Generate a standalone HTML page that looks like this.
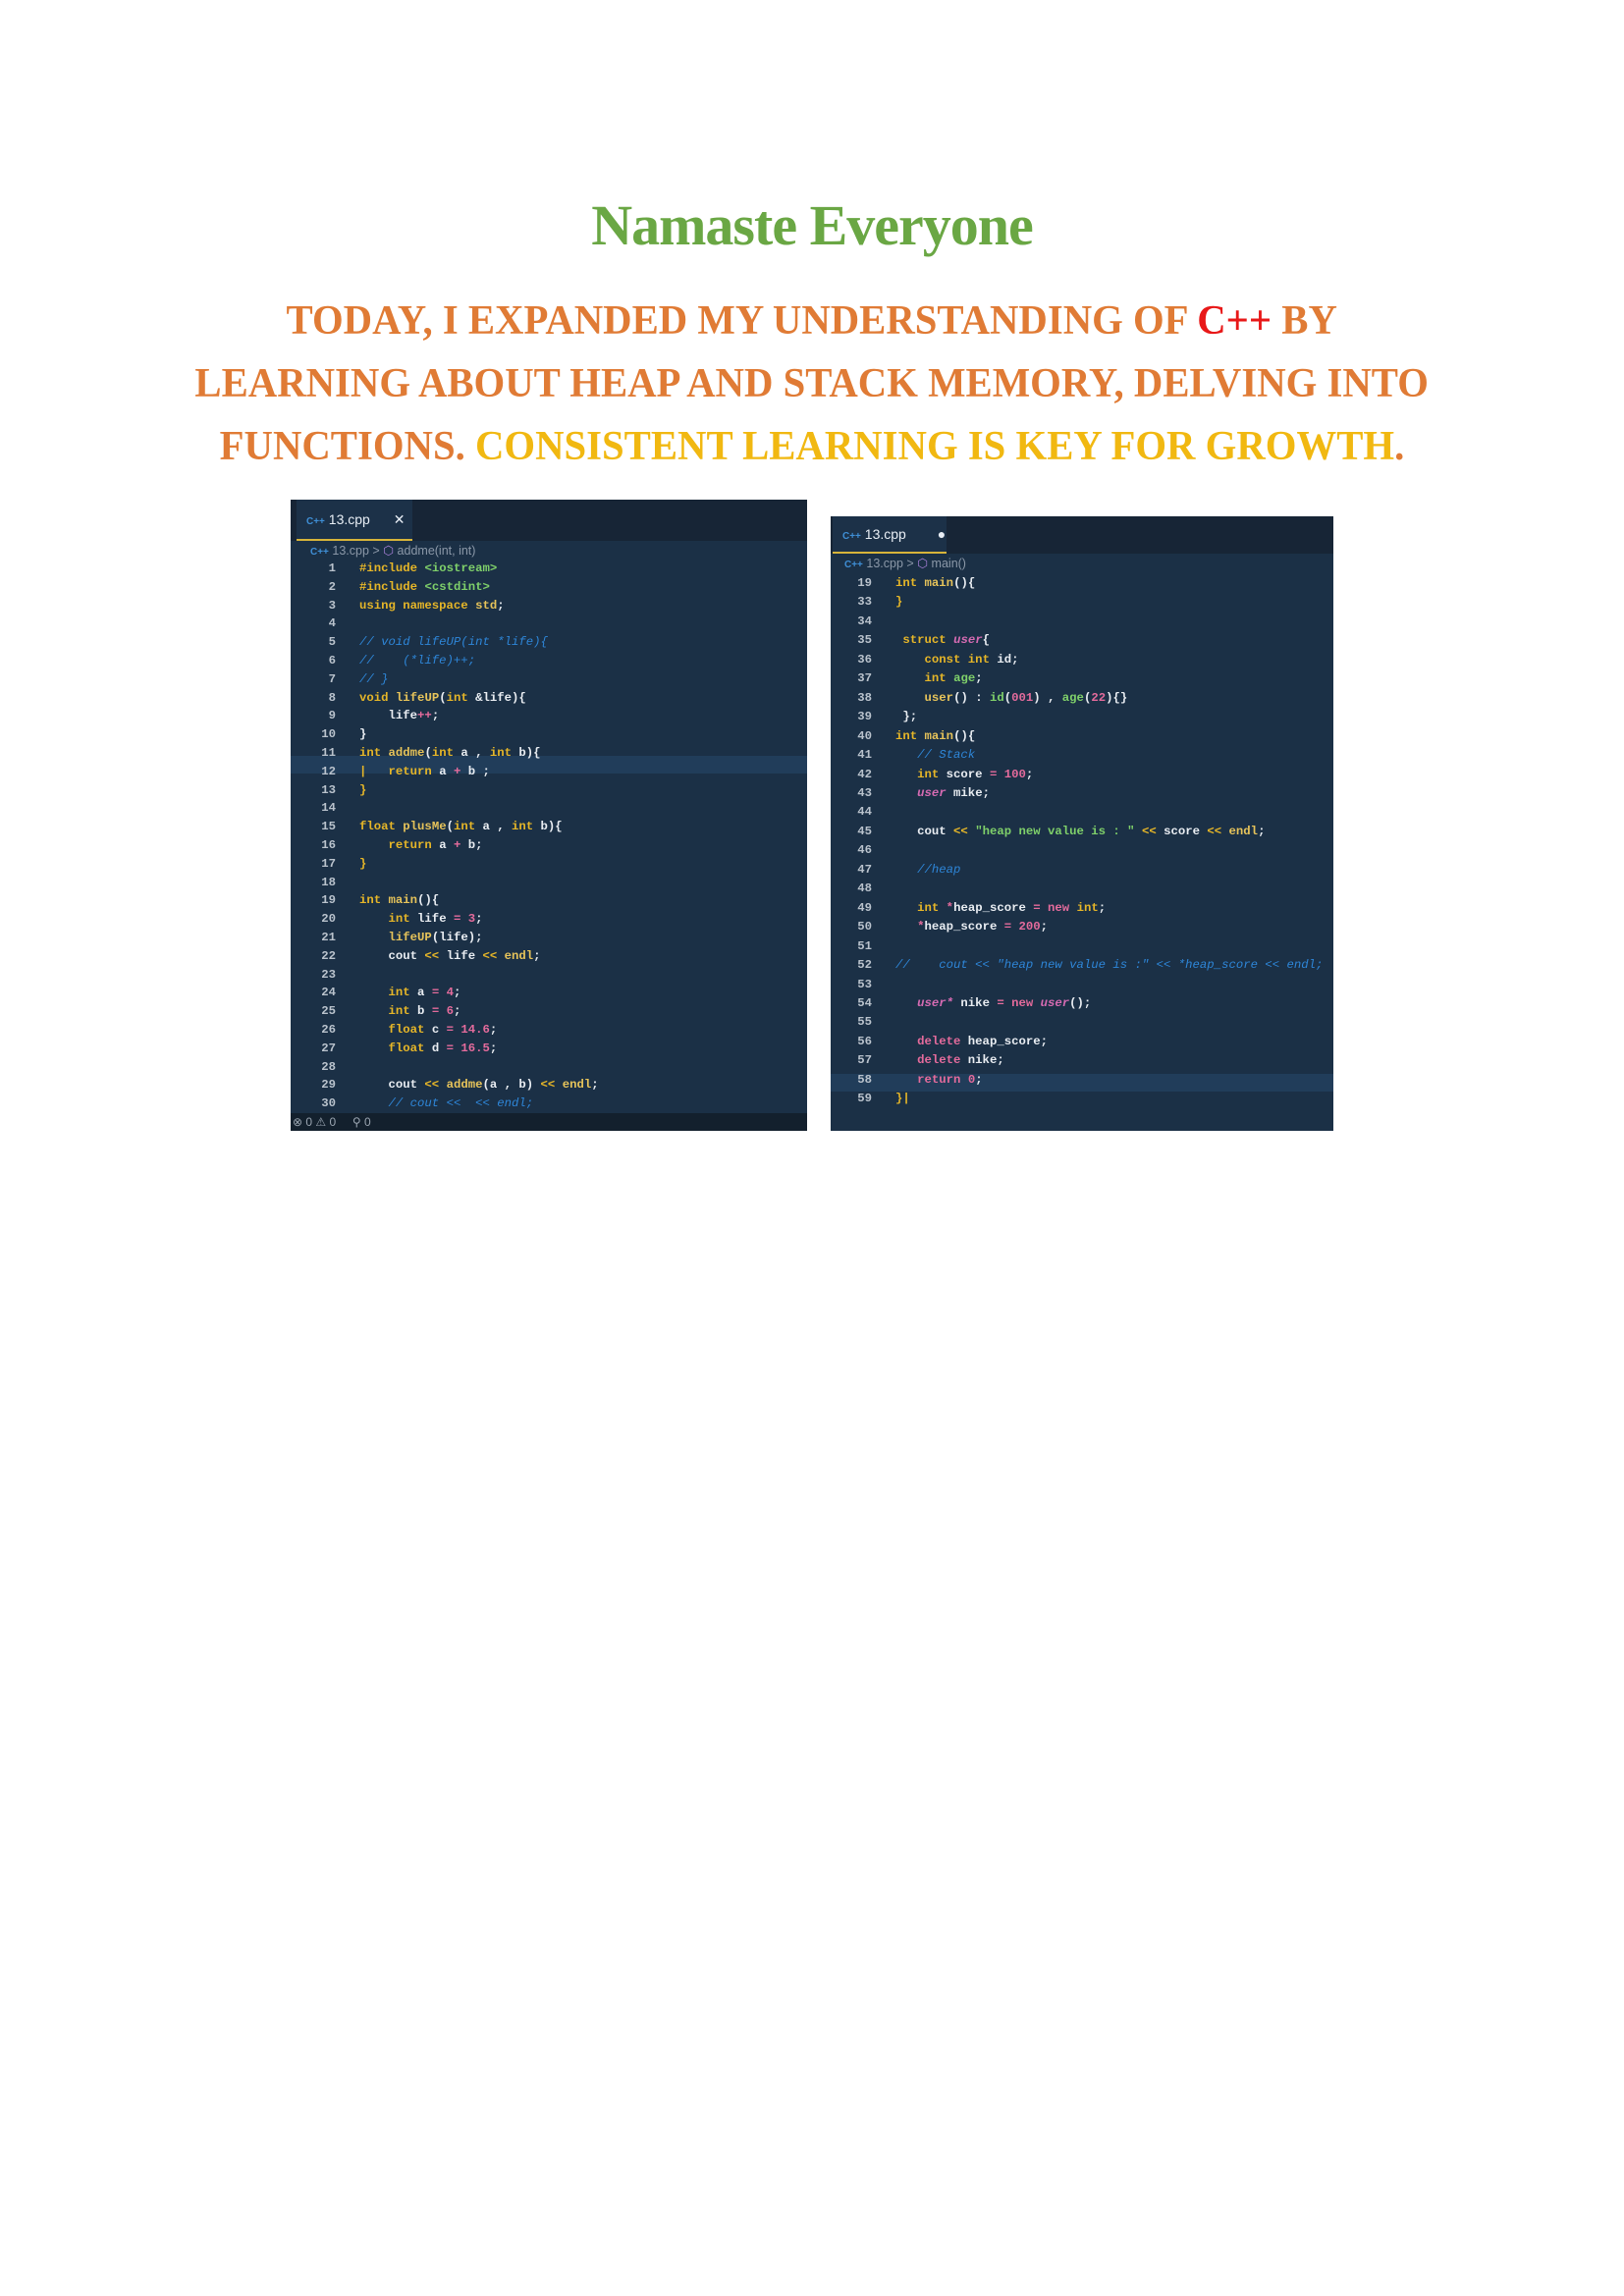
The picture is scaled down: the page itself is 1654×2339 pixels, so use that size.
<!DOCTYPE html>
<html><head><meta charset="utf-8"><style>
*{margin:0;padding:0;box-sizing:border-box}
body{width:1654px;height:2339px;background:#fff;position:relative;overflow:hidden}
h1{position:absolute;left:0;width:1654px;text-align:center;top:196px;font:700 58px "Liberation Serif",serif;color:#6aa744;letter-spacing:-1px}
.l{position:absolute;left:0;width:1654px;text-align:center;font:700 42px "Liberation Serif",serif;color:#e07b35;text-transform:uppercase;white-space:nowrap}
.l span.in{display:inline-block;transform-origin:center}
.y{color:#f1b811}.r{color:#e81818}
.p{position:absolute;background:#1b3046;overflow:hidden;font-family:"Liberation Mono",monospace}
.tb{position:absolute;left:0;top:0;right:0;background:#172536}
.tab{position:absolute;left:6px;top:0;background:#1c3148;border-bottom:2px solid #d7b43a;color:#e8eef5;font:14px "Liberation Sans",sans-serif;padding:0 10px;white-space:nowrap}
.bc{position:absolute;color:#8b98a8;font:12.5px "Liberation Sans",sans-serif;white-space:nowrap}
.cpp{color:#3f8fd6;font-size:10px;font-weight:700}
.code{position:absolute;font-size:12.3px;font-weight:700;white-space:pre;color:#e9edf2}
.n{position:absolute;text-align:right;color:#b9c2cc;font-size:12.3px;font-weight:700;white-space:pre}
.k{color:#e6b628}.g{color:#7fd06a}.c{color:#2e86d8;font-style:italic;font-weight:400}.m{color:#e46b9c}.u{color:#d66bb3;font-style:italic}.f{color:#e6c35a}
.hl{position:absolute;left:0;right:0;background:#213d5a}
</style></head><body>
<h1>Namaste Everyone</h1>
<div class="l" style="top:303px"><span class="in" style="transform:scaleX(.97)">Today, I expanded my understanding of <span class="r">C++</span> by</span></div>
<div class="l" style="top:367px"><span class="in" style="transform:scaleX(.97)">learning about heap and stack memory, delving into</span></div>
<div class="l" style="top:431px"><span class="in" style="transform:scaleX(.97)">functions. <span class="y">Consistent learning is key for growth</span>.</span></div>

<div class="p" style="left:296px;top:509px;width:526px;height:643px">
<div class="tb" style="height:42px"></div>
<div class="tab" style="height:42px;line-height:40px;width:118px"><span class="cpp">C++</span> 13.cpp <span style="margin-left:20px">✕</span></div>
<div class="bc" style="left:20px;top:44px"><span class="cpp">C++</span> 13.cpp &gt; <span style="color:#a780d8">⬡</span> addme(int, int)</div>
<div class="hl" style="top:261px;height:18px"></div>
<div class="n" style="left:0;width:46px;top:61px;line-height:18.8px">1
2
3
4
5
6
7
8
9
10
11
12
13
14
15
16
17
18
19
20
21
22
23
24
25
26
27
28
29
30</div>
<div class="code" style="left:70px;top:61px;line-height:18.8px"><span class="k">#include</span> <span class="g">&lt;iostream&gt;</span>
<span class="k">#include</span> <span class="g">&lt;cstdint&gt;</span>
<span class="k">using namespace</span> <span class="f">std</span>;

<span class="c">// void lifeUP(int *life){</span>
<span class="c">//    (*life)++;</span>
<span class="c">// }</span>
<span class="k">void</span> <span class="f">lifeUP</span>(<span class="k">int</span> &amp;life){
    life<span class="m">++</span>;
}
<span class="k">int</span> <span class="f">addme</span>(<span class="k">int</span> a , <span class="k">int</span> b){
<span class="k">|</span>   <span class="k">return</span> a <span class="m">+</span> b ;
<span class="k">}</span>

<span class="k">float</span> <span class="f">plusMe</span>(<span class="k">int</span> a , <span class="k">int</span> b){
    <span class="k">return</span> a <span class="m">+</span> b;
<span class="k">}</span>

<span class="k">int</span> <span class="f">main</span>(){
    <span class="k">int</span> life <span class="m">=</span> <span class="m">3</span>;
    <span class="f">lifeUP</span>(life);
    cout <span class="k">&lt;&lt;</span> life <span class="k">&lt;&lt;</span> <span class="f">endl</span>;

    <span class="k">int</span> a <span class="m">=</span> <span class="m">4</span>;
    <span class="k">int</span> b <span class="m">=</span> <span class="m">6</span>;
    <span class="k">float</span> c <span class="m">=</span> <span class="m">14.6</span>;
    <span class="k">float</span> d <span class="m">=</span> <span class="m">16.5</span>;

    cout <span class="k">&lt;&lt;</span> <span class="f">addme</span>(a , b) <span class="k">&lt;&lt;</span> <span class="f">endl</span>;
    <span class="c">// cout &lt;&lt;  &lt;&lt; endl;</span></div>
<div style="position:absolute;left:0;right:0;bottom:0;height:18px;background:#13202d;color:#9aa5b1;font:12px 'Liberation Sans',sans-serif;line-height:18px;padding-left:2px;white-space:nowrap">⊗ 0 ⚠ 0 &nbsp;&nbsp;&nbsp; ⚲ 0</div>
</div>

<div class="p" style="left:846px;top:526px;width:512px;height:626px">
<div class="tb" style="height:38px"></div>
<div class="tab" style="height:38px;line-height:36px;width:116px;left:2px"><span class="cpp">C++</span> 13.cpp <span style="margin-left:28px">●</span></div>
<div class="bc" style="left:14px;top:40px"><span class="cpp">C++</span> 13.cpp &gt; <span style="color:#a780d8">⬡</span> main()</div>
<div class="hl" style="top:568px;height:18px"></div>
<div class="n" style="left:0;width:42px;top:59px;line-height:19.45px">19
33
34
35
36
37
38
39
40
41
42
43
44
45
46
47
48
49
50
51
52
53
54
55
56
57
58
59</div>
<div class="code" style="left:66px;top:59px;line-height:19.45px"><span class="k">int</span> <span class="f">main</span>(){
<span class="k">}</span>

 <span class="k">struct</span> <span class="u">user</span>{
    <span class="k">const int</span> id;
    <span class="k">int</span> <span class="g">age</span>;
    <span class="f">user</span>() : <span class="g">id</span>(<span class="m">001</span>) , <span class="g">age</span>(<span class="m">22</span>){}
 };
<span class="k">int</span> <span class="f">main</span>(){
   <span class="c">// Stack</span>
   <span class="k">int</span> score <span class="m">=</span> <span class="m">100</span>;
   <span class="u">user</span> mike;

   cout <span class="k">&lt;&lt;</span> <span class="g">"heap new value is : "</span> <span class="k">&lt;&lt;</span> score <span class="k">&lt;&lt;</span> <span class="f">endl</span>;

   <span class="c">//heap</span>

   <span class="k">int</span> <span class="m">*</span>heap_score <span class="m">=</span> <span class="m">new</span> <span class="k">int</span>;
   <span class="m">*</span>heap_score <span class="m">=</span> <span class="m">200</span>;

<span class="c">//    cout &lt;&lt; "heap new value is :" &lt;&lt; *heap_score &lt;&lt; endl;</span>

   <span class="u">user*</span> nike <span class="m">=</span> <span class="m">new</span> <span class="u">user</span>();

   <span class="m">delete</span> heap_score;
   <span class="m">delete</span> nike;
   <span class="m">return</span> <span class="m">0</span>;
<span class="k">}|</span></div>
</div>
</body></html>
